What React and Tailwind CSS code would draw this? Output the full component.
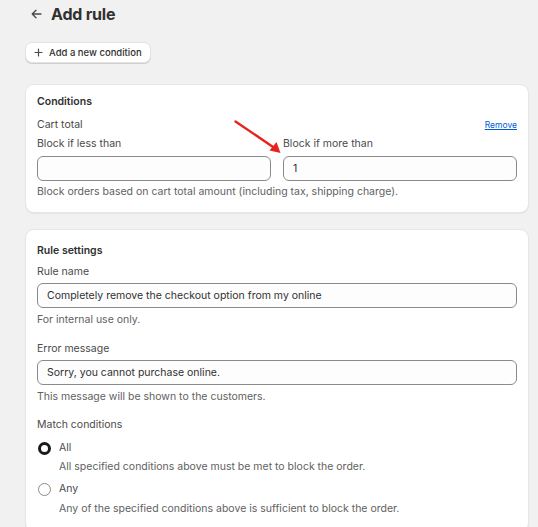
import { useState } from 'react'

function Radio({ checked }) {
    if (checked) {
        return <span className="w-[13px] h-[13px] rounded-full border-[3.5px] border-[#1a1a1a] bg-white shrink-0"></span>
    }
    return <span className="w-[13px] h-[13px] rounded-full border border-[#8a8a8a] bg-white shrink-0"></span>
}

export default function App() {
    const [match, setMatch] = useState('all')
    const [form, setForm] = useState({
        less: '',
        more: '1',
        name: 'Completely remove the checkout option from my online',
        error: 'Sorry, you cannot purchase online.',
    })

    const handleChange = (e) => {
        setForm({ ...form, [e.target.name]: e.target.value })
    }

    const inputClass = "w-full h-[25px] px-[9px] border border-[#8a8a8a] rounded-[6px] bg-[#fdfdfd] text-[10.5px] text-[#303030] outline-none"

    return (
        <div className="min-h-[527px] bg-[#f1f1f1] text-[10.5px] leading-[16px] text-[#303030] pl-[25px] pr-[9px]" style={{ fontFamily: 'Inter, "Noto Sans", sans-serif' }}>
            <div className="flex items-center gap-[9px] pt-[1px] pl-[6px] h-[26px] box-content">
                <svg width="11" height="10" viewBox="0 0 11 10" fill="none" stroke="#4a4a4a" strokeWidth="1.3" strokeLinecap="round" strokeLinejoin="round">
                    <path d="M10 5H1.2M5 1.2 1.2 5 5 8.8" />
                </svg>
                <h1 className="text-[16px] leading-[20px] font-bold text-[#303030] tracking-[-0.2px]">Add rule</h1>
            </div>

            <button className="mt-[15px] h-[21px] px-[8px] flex items-center gap-[6px] bg-white border border-[#e3e3e3] rounded-[7px] shadow-[0_1px_0_#cfcfcf] text-[9.5px] font-medium text-[#303030]">
                <svg width="9" height="9" viewBox="0 0 9 9" stroke="#4a4a4a" strokeWidth="1.2" strokeLinecap="round">
                    <path d="M4.5 1v7M1 4.5h7" />
                </svg>
                Add a new condition
            </button>

            <div className="relative mt-[21px] bg-white border border-[#e6e6e6] rounded-[9px] shadow-[0_1px_1px_rgba(0,0,0,0.06)] pt-[9px] px-[11px] pb-[12px]">
                <div className="font-semibold">Conditions</div>
                <div className="mt-[7px] flex items-center justify-between">
                    <span className="text-[#4a4a4a]">Cart total</span>
                    <a href="#" className="text-[8.5px] text-[#005bd3] underline">Remove</a>
                </div>
                <div className="mt-[3px] grid grid-cols-2 gap-[12px]">
                    <div>
                        <div className="text-[#4a4a4a]">Block if less than</div>
                        <input name="less" className={inputClass + " mt-[4px]"} value={form.less} onChange={handleChange} />
                    </div>
                    <div>
                        <div className="text-[#4a4a4a]">Block if more than</div>
                        <input name="more" className={inputClass + " mt-[4px]"} value={form.more} onChange={handleChange} />
                    </div>
                </div>
                <div className="mt-[3px] text-[#616161]">Block orders based on cart total amount (including tax, shipping charge).</div>

                <svg className="absolute left-[208px] top-[35px]" width="50" height="36" viewBox="0 0 50 36" fill="none">
                    <path d="M1.5 1.5 42 29" stroke="#e8231f" strokeWidth="2.4" strokeLinecap="round" />
                    <path d="M46.5 33 35.5 30.5 42.5 22Z" fill="#e8231f" />
                </svg>
            </div>

            <div className="mt-[16px] bg-white border border-[#e6e6e6] rounded-[9px] shadow-[0_1px_1px_rgba(0,0,0,0.06)] pt-[13px] px-[11px] pb-[14px]">
                <div className="font-semibold">Rule settings</div>
                <div className="mt-[5px] text-[#4a4a4a]">Rule name</div>
                <input name="name" className={inputClass + " mt-[3px] h-[24px]"} value={form.name} onChange={handleChange} />
                <div className="mt-[4px] text-[#616161]">For internal use only.</div>

                <div className="mt-[13px] text-[#4a4a4a]">Error message</div>
                <input name="error" className={inputClass + " mt-[3px] h-[24px]"} value={form.error} onChange={handleChange} />
                <div className="mt-[4px] text-[#616161]">This message will be shown to the customers.</div>

                <div className="mt-[12px] text-[#4a4a4a]">Match conditions</div>
                <label className="mt-[7px] flex items-center gap-[8px] pl-[1px] cursor-pointer" onClick={() => setMatch('all')}>
                    <Radio checked={match === 'all'} />
                    <span className="text-[#4a4a4a]">All</span>
                </label>
                <div className="mt-[3px] pl-[22px] text-[#616161]">All specified conditions above must be met to block the order.</div>
                <label className="mt-[6px] flex items-center gap-[8px] pl-[1px] cursor-pointer" onClick={() => setMatch('any')}>
                    <Radio checked={match === 'any'} />
                    <span className="text-[#4a4a4a]">Any</span>
                </label>
                <div className="mt-[4px] pl-[22px] text-[#616161]">Any of the specified conditions above is sufficient to block the order.</div>
            </div>
        </div>
    )
}
